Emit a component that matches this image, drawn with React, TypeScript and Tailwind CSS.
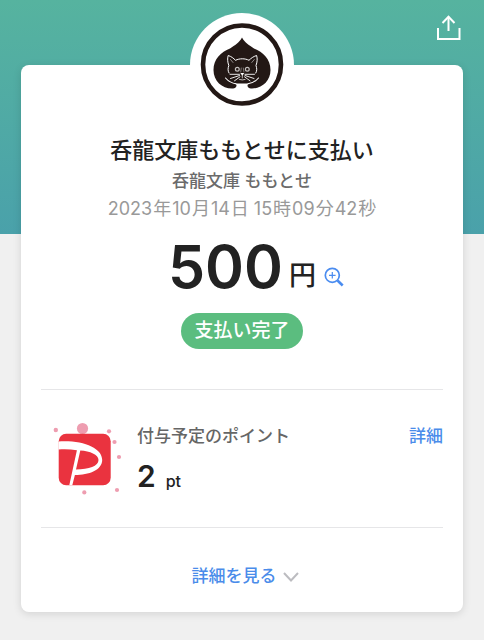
import React from "react";

function ShareIcon() {
  return (
    <svg viewBox="0 0 26 26" className="h-[26px] w-[26px]" fill="none" stroke="currentColor" strokeWidth="2" aria-hidden="true">
      <path d="M2 13v11h21.500V13" />
      <path d="M12.500 16V1.800" />
      <path d="M6.500 8l6-6.200 6 6.200" />
    </svg>
  );
}

function ShopLogo() {
  return (
    <svg viewBox="0 0 104 104" className="h-[104px] w-[104px]" role="img" aria-label="呑龍文庫">
      <circle cx="52" cy="52" r="52" fill="#fff" />
      <circle cx="52" cy="51.500" r="39" fill="#fff" stroke="#231815" strokeWidth="4.600" />
      <path
        d="M52 24.500C55 30 59 32 64 35.500C73 39 80.500 46 80.500 57C80.500 68 72 75.500 62 75.500C58.500 75.500 57.500 73.800 57.500 72.500C57.500 71.300 58.500 70.800 60 70.500H44C45.500 70.800 46.500 71.300 46.500 72.500C46.500 73.800 45.500 75.500 42 75.500C32 75.500 23.500 68 23.500 57C23.500 46 31 39 40 35.500C45 32 49 30 52 24.500Z"
        fill="#231815"
      />
      <g fill="none" stroke="#fff" strokeLinecap="round" strokeLinejoin="round">
        <path d="M39 60C37.500 57.500 38 55 38.800 52.500C37.500 49 37.300 45.500 38.200 42.500C41.500 43.500 43.500 45.300 45.500 47.300C49.500 45.300 55 45.300 59 47.300C61 45.300 63.300 43.500 66.600 42.500C67.500 45.500 67.300 49 66 52.500C66.800 55 67.300 57.500 65.800 60" strokeWidth="1" />
        <path d="M40.500 46.500l2.500 3M64.300 46.500l-2.500 3" strokeWidth=".5" />
        <path d="M49.500 61.300H40M49.500 62.500l-9 3M50 63.800l-5.500 4M55 61.300h9.500M55 62.500l9 3M54.500 63.800l5.500 4" strokeWidth=".9" />
        <path d="M51.300 55l-.6 4M53.300 55l.6 4" strokeWidth=".4" />
        <path d="M52.300 62v3M49.500 66.500q2.800 1 5.600 0" strokeWidth=".7" />
        <path d="M35.500 65C39 69 42 70.300 46 70.800M68.500 65C65 69 62 70.300 58 70.800" strokeWidth="1.100" />
      </g>
      <g fill="#231815" stroke="#c4c0bf" strokeWidth="1.200">
        <circle cx="47.300" cy="56.300" r="1.900" />
        <circle cx="57.300" cy="56.300" r="1.900" />
      </g>
      <path d="M50.300 60h4l-2 2.700z" fill="#fff" />
    </svg>
  );
}

function ZoomInIcon() {
  return (
    <svg viewBox="0 0 20 20" className="h-5 w-5" fill="none" stroke="currentColor" aria-hidden="true">
      <circle cx="8.300" cy="8.300" r="7" strokeWidth="1.700" />
      <path d="M8.300 5v6.600M5 8.300h6.600" strokeWidth="1.200" />
      <path d="M13.500 13.500l5.200 5" strokeWidth="2.600" />
    </svg>
  );
}

function PointLogo() {
  return (
    <svg viewBox="0 0 72 76" className="h-[76px] w-[72px] shrink-0" role="img" aria-label="PayPayポイント">
      <g fill="#ee9db0">
        <circle cx="31.500" cy="8.500" r="5.600" />
        <circle cx="4.800" cy="10" r="2.200" />
        <circle cx="58" cy="11.300" r="2.100" />
        <circle cx="63.500" cy="22" r="2.100" />
        <circle cx="68" cy="37" r="2.100" />
        <circle cx="66" cy="70" r="2.100" />
        <circle cx="33.300" cy="72.400" r="2.100" />
      </g>
      <rect x="7.700" y="13.700" width="52" height="51.500" rx="7.500" fill="#ea333f" />
      <path
        fillRule="evenodd"
        d="M7.500 21.500C32 20 51.200 28 51.200 40C51.200 50 38 55 23.900 55L21.300 65.200H18.300L25.900 30.200C20 29.300 14 29 7.500 29.500ZM29.300 30.500L25 49.500C38 49.500 47.500 46 47.500 40C47.500 34.500 39 31 29.300 30.500Z"
        fill="#fff"
      />
    </svg>
  );
}

function ChevronIcon() {
  return (
    <svg viewBox="0 0 16 10" className="h-[10px] w-4 text-[#bcbcc0]" fill="none" stroke="currentColor" strokeWidth="2" aria-hidden="true">
      <path d="M1 1l7 7.500L15 1" />
    </svg>
  );
}

const paidAt: [string, string][] = [
  ["2023", "年"],
  ["10", "月"],
  ["14", "日"],
  ["15", "時"],
  ["09", "分"],
  ["42", "秒"],
];

export default function App() {
  return (
    <div className="min-h-screen bg-[#f0f0f0] pb-7 font-['Inter','Noto_Sans_CJK_JP',sans-serif] text-[#222]">
      <header className="flex h-[234px] items-start justify-end bg-linear-to-b from-[#56b39f] to-[#4aa1aa] px-[22px] pt-[15px]">
        <button type="button" aria-label="共有" className="text-white">
          <ShareIcon />
        </button>
      </header>

      <main className="relative mx-[21px] -mt-[169px] rounded-lg bg-white px-5 shadow-[0_2px_8px_rgba(0,0,0,0.12)]">
        <section className="flex flex-col items-center border-b border-[#e6e6e8] pb-10">
          <div className="-mt-[52px]">
            <ShopLogo />
          </div>
          <h1 className="mt-[17px] text-[22px] leading-8 font-medium">呑龍文庫ももとせに支払い</h1>
          <p className="mt-px text-[17px] leading-7 font-medium text-[#6b6b6b]">呑龍文庫 ももとせ</p>
          <p className="flex gap-px text-[18px] leading-7 text-[#999]">
            {paidAt.map(([value, unit]) => (
              <React.Fragment key={unit}>
                <span className={unit === "時" ? "ml-1" : ""}>{value}</span>
                <span>{unit}</span>
              </React.Fragment>
            ))}
          </p>
          <div className="mt-2 grid w-full grid-cols-[1fr_auto_1fr] items-end gap-2">
            <p className="col-start-2 flex items-end gap-[6px]">
              <strong className="text-[59px] leading-[72px] font-semibold">500</strong>
              <span className="text-[27px] leading-[54px] font-medium">円</span>
            </p>
            <button type="button" aria-label="拡大" className="justify-self-start py-4 text-[#4a8cf0]">
              <ZoomInIcon />
            </button>
          </div>
          <p className="mt-[10px] rounded-full bg-[#5bbd7f] px-[13px] text-[19px] leading-9 font-medium text-white">支払い完了</p>
        </section>

        <section className="flex items-start border-b border-[#e6e6e8] pt-[30px] pb-[31px] pl-[10px]">
          <PointLogo />
          <div className="ml-[14px] flex-1">
            <h2 className="text-[17px] leading-8 font-medium text-[#666]">付与予定のポイント</h2>
            <p className="mt-1 flex items-baseline gap-[10px]">
              <strong className="text-[30px] leading-10 font-semibold">2</strong>
              <span className="text-[16px] font-medium">pt</span>
            </p>
          </div>
          <a href="#point" className="text-[17px] leading-8 font-medium text-[#4a8cea]">詳細</a>
        </section>

        <button type="button" className="flex h-[84px] w-full items-center justify-center gap-[6px] pt-[14px] pl-[6px] text-[17px] font-medium text-[#4a8cea]">
          詳細を見る
          <ChevronIcon />
        </button>
      </main>
    </div>
  );
}
